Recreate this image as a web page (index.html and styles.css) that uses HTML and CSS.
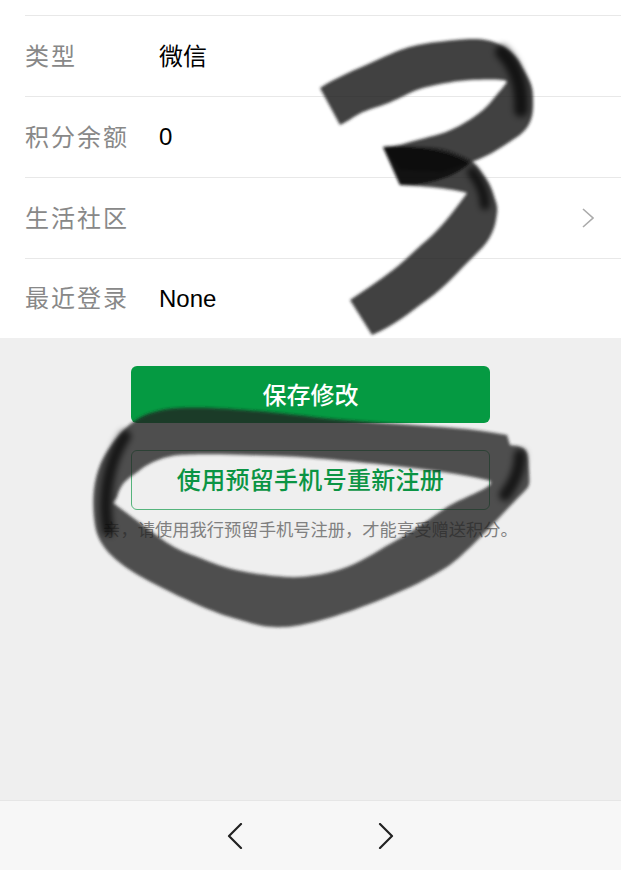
FILE: index.html
```html
<!DOCTYPE html>
<html lang="zh-CN">
<head>
<meta charset="utf-8">
<title>账户信息</title>
<link rel="stylesheet" href="styles.css">
</head>
<body>
<div class="page">
  <section class="list">
    <div class="row"><span class="label">类型</span><span class="value cjk">微信</span></div>
    <div class="row"><span class="label">积分余额</span><span class="value">0</span></div>
    <div class="row"><span class="label">生活社区</span><span class="value"></span>
      <svg class="row-arrow" viewBox="0 0 12 20" aria-hidden="true"><path d="M1 1 L11 10 L1 19"/></svg>
    </div>
    <div class="row"><span class="label">最近登录</span><span class="value">None</span></div>
  </section>
  <section class="actions">
    <button class="btn btn-primary">保存修改</button>
    <button class="btn btn-outline">使用预留手机号重新注册</button>
    <p class="note">亲&#xFF0C;请使用我行预留手机号注册&#xFF0C;才能享受赠送积分。</p>
  </section>
  <nav class="toolbar">
    <svg class="nav-arrow" viewBox="0 0 16 26" aria-hidden="true"><path d="M14 1 L2 13 L14 25"/></svg>
    <svg class="nav-arrow" viewBox="0 0 16 26" aria-hidden="true"><path d="M2 1 L14 13 L2 25"/></svg>
  </nav>
</div>
<svg class="scribble" viewBox="0 0 621 870" aria-hidden="true">
  <defs>
    <filter id="soft" x="-10%" y="-10%" width="120%" height="120%"><feGaussianBlur stdDeviation="1.6"/></filter>
    <filter id="softer" x="-30%" y="-30%" width="160%" height="160%"><feGaussianBlur stdDeviation="3"/></filter>
  </defs>
  <g filter="url(#soft)">
    <path class="ink" d="M320 88 C335 78 355 70 377 60 S410 45 437 42 S465 39 477 39 S510 45 520 63 S533 85 533 97 S535 125 517 137 S490 155 477 160 L443 172 L400 170 L383 147 C395 146 400 145 410 142 S430 137 443 133 S480 115 490 103 S505 85 507 82 S485 79 470 80 S445 83 427 87 S400 100 377 107 S355 118 340 125 Z"/>
    <path class="ink" d="M383 147 C400 146 410 146 427 147 S448 150 460 155 S475 163 480 170 S490 183 493 193 S498 205 497 213 S495 228 490 237 S480 250 467 263 S445 287 427 300 S395 325 372 335 L350 300 C365 290 380 280 393 270 S415 250 427 240 S455 210 467 193 C450 188 420 186 400 185 Z"/>
    <path class="ink ink-oval" fill-rule="evenodd" d="M507 435 C470 428 440 427 413 425 S350 421 313 417 S220 406 180 408 S125 425 108 450 S92 505 95 525 S112 558 130 570 S205 610 230 617 S262 628 285 627 S350 612 380 600 S430 578 447 567 S495 522 513 503 S530 490 529 470 S528 447 510 445 Z M117 497 C122 480 130 478 140 470 S165 456 180 455 S225 454 247 455 S290 456 313 458 S380 464 413 468 S470 476 487 480 S462 497 447 507 S412 532 397 540 S365 560 347 567 S305 578 287 577 S235 572 213 563 S180 552 163 540 S130 515 113 503 Z"/>
    <path class="dark" d="M383 147 C410 146 445 148 470 163 C455 178 425 186 400 185 Z"/>
  </g>
  <g filter="url(#softer)">
    <path class="shade w14" d="M502 52 C515 65 522 85 521 110"/>
    <path class="shade w10" d="M472 172 C481 184 485 195 485 205"/>
    <path class="shade w12" d="M125 436 C108 462 102 500 108 530"/>
    <path class="shade w12" d="M520 455 C520 470 515 482 505 495"/>
  </g>
</svg>
</body>
</html>
```
FILE: styles.css
```css
* { box-sizing: border-box; }
html, body { margin: 0; padding: 0; height: 100%; overflow: hidden; }
body {
  background: #efefef;
  font-family: "Liberation Sans", "Noto Sans CJK SC", sans-serif;
}
.page { display: flex; flex-direction: column; height: 870px; }

.list { background: #fff; padding-top: 15px; padding-left: 25px; }
.row {
  display: flex;
  align-items: center;
  height: 81px;
  border-top: 1px solid #e8e8e8;
  padding-right: 27px;
}
.row:last-child { height: 80px; }
.label {
  width: 134px;
  padding-bottom: 4px;
  font-size: 24px;
  letter-spacing: 2px;
  color: #888;
}
.value { flex: 1; font-size: 24px; color: #000; }
.cjk { padding-bottom: 4px; }
.row-arrow { width: 12px; height: 20px; fill: none; stroke: #ababab; stroke-width: 1.6; }

.actions { display: flex; flex-direction: column; align-items: center; padding-top: 28px; }
.btn {
  width: 359px;
  font-family: inherit;
  font-size: 24px;
  font-weight: 500;
  border-radius: 6px;
  padding: 0 0 3px;
}
.btn-primary { height: 57px; background: #059a42; color: #fff; border: 0; }
.btn-outline {
  height: 60px;
  margin-top: 27px;
  background: transparent;
  color: #0b9444;
  border: 1px solid #55b47c;
  letter-spacing: 0.3px;
}
.note {
  margin: 7px 0 0;
  font-size: 17.3px;
  line-height: 26px;
  color: #808080;
  white-space: nowrap;
}

.toolbar {
  margin-top: auto;
  height: 70px;
  background: #f7f7f7;
  border-top: 1px solid #e6e6e6;
  display: flex;
  justify-content: center;
  align-items: center;
  gap: 135px;
}
.nav-arrow { width: 16px; height: 26px; fill: none; stroke: #222; stroke-width: 2.2; stroke-linecap: round; stroke-linejoin: round; }

.scribble { position: absolute; left: 0; top: 0; width: 621px; height: 870px; pointer-events: none; }
.ink { fill: #222; fill-opacity: 0.85; }
.ink-oval { fill-opacity: 0.78; }
.dark { fill: #050505; fill-opacity: 0.85; }
.shade { fill: none; stroke: #000; stroke-opacity: 0.7; stroke-linecap: round; }
.w10 { stroke-width: 10; }
.w12 { stroke-width: 12; }
.w14 { stroke-width: 14; }
```
